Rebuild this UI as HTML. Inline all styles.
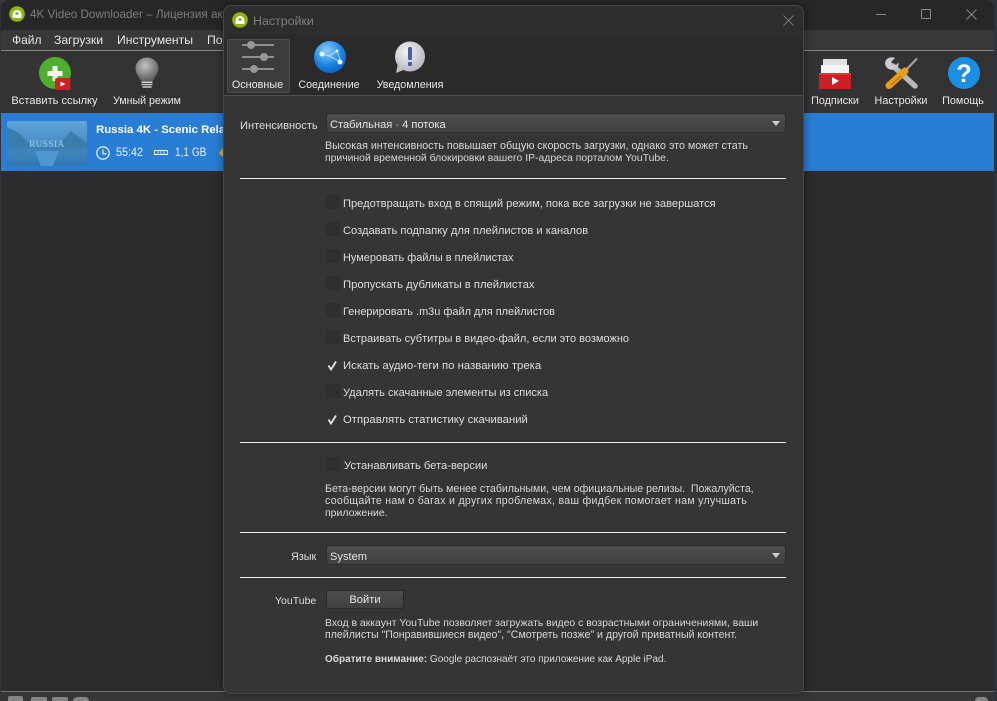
<!DOCTYPE html>
<html><head><meta charset="utf-8"><style>
*{box-sizing:border-box}
html,body{margin:0;padding:0;width:997px;height:701px;overflow:hidden;background:#30343a;font-family:"Liberation Sans","Noto Sans CJK SC",sans-serif;color:#e2e2e2}
.a{position:absolute;white-space:pre}
.t{font-size:11.2px;line-height:14px;color:#dedede}
.s{font-size:10.6px;line-height:13px;color:#d8d8d8}
.cb{position:absolute;left:326px;width:14px;height:14px;background:#2f2f2f;border-radius:1px}
.l{position:absolute;left:240px;height:1px;background:#efefef}
.combo{position:absolute;left:326px;width:460px;height:20px;border:1px solid #2a2a2a;border-radius:2px;background:linear-gradient(#4d4d4d,#404040);font-size:11.1px;line-height:20px;padding:1px 0 0 3px;color:#e4e4e4}
.combo:after{content:"";position:absolute;right:5px;top:7px;border-left:4.5px solid transparent;border-right:4.5px solid transparent;border-top:5px solid #cfcfcf}
.tb{font-size:10.8px;line-height:14px;color:#e8e8e8;text-align:center}
</style></head><body>
<!-- main window -->
<div class="a" style="left:1px;top:0;width:993px;height:701px;background:#2c2c2c;border-radius:8px 8px 0 0;overflow:hidden">
 <div class="a" style="left:0;top:0;width:993px;height:30px;background:#272727"></div>
 <div class="a" style="left:0;top:30px;width:993px;height:20px;background:#383838"></div>
 <div class="a" style="left:0;top:50px;width:993px;height:1px;background:#858585"></div>
 <div class="a" style="left:0;top:51px;width:993px;height:62px;background:#333"></div>
 <div class="a" style="left:0;top:113px;width:993px;height:58px;background:#2a7dd4"></div>
 <div class="a" style="left:0;top:691px;width:993px;height:1px;background:#6e6e6e"></div>
 <div class="a" style="left:0;top:692px;width:993px;height:9px;background:#363636"></div>
</div>
<svg class="a" style="left:9px;top:6px" width="17" height="17" viewBox="0 0 17 17"><circle cx="8" cy="8" r="7.8" fill="#8fb512"/><path d="M3.5 8.5a4.5 4.5 0 0 1 9 0z" fill="#fff"/><rect x="3.5" y="8.5" width="9" height="3.5" rx="1" fill="#fff"/><rect x="6.5" y="6.5" width="3" height="2" fill="#6f8f10"/></svg>
<div class="a" style="left:30px;top:7px;font-size:11.7px;line-height:16px;color:#7d7d7d">4K Video Downloader – Лицензия ак</div>
<div class="a t" style="left:12px;top:33px;font-size:12px;color:#e6e6e6">Файл</div>
<div class="a t" style="left:54px;top:33px;font-size:12.2px;color:#e6e6e6">Загрузки</div>
<div class="a t" style="left:117px;top:33px;font-size:12.2px;color:#e6e6e6">Инструменты</div>
<div class="a t" style="left:207px;top:33px;font-size:12.2px;color:#e6e6e6">По</div>
<!-- window controls -->
<div class="a" style="left:876px;top:14px;width:10px;height:1px;background:#8a8a8a"></div>
<div class="a" style="left:921px;top:9px;width:10px;height:10px;border:1px solid #8a8a8a;border-radius:1px"></div>
<svg class="a" style="left:966px;top:9px" width="11" height="11"><path d="M.5.5l10 10M10.5.5l-10 10" stroke="#8a8a8a" fill="none"/></svg>
<!-- toolbar left -->
<svg class="a" style="left:38px;top:56px" width="36" height="36" viewBox="0 0 36 36"><circle cx="17" cy="17" r="16" fill="#4fae2c"/><path d="M14.500 10h5v5h5v5h-5v5h-5v-5h-5v-5h5z" fill="#f3f7ee"/><rect x="17" y="22" width="15.500" height="12" rx="2" fill="#cf2027"/><path d="M22.500 25.500l5 2.500-5 2.500z" fill="#fff"/></svg>
<div class="a tb" style="left:0;top:94px;width:109px;font-size:11.1px">Вставить ссылку</div>
<svg class="a" style="left:135px;top:57px" width="24" height="32" viewBox="0 0 24 32"><defs><radialGradient id="b" cx=".42" cy=".35" r=".65"><stop offset="0" stop-color="#c4c4c4"/><stop offset="1" stop-color="#5e5e5e"/></radialGradient></defs><path d="M12 .5C5.500.5.500 5.500.5 11.500c0 5.500 4 8 5.500 12.500h12c1.500-4.500 5.500-7 5.500-12.500C23.500 5.500 18.500.5 12 .5z" fill="url(#b)"/><rect x="6.500" y="24.500" width="11" height="1.500" fill="#d8d8d8"/><rect x="6.500" y="26.800" width="11" height="1.500" fill="#c4c4c4"/><rect x="7.500" y="29" width="9" height="2" fill="#a8a8a8"/></svg>
<div class="a tb" style="left:108px;top:94px;width:78px;font-size:10.6px">Умный режим</div>
<!-- toolbar right -->
<svg class="a" style="left:819px;top:58px" width="32" height="32" viewBox="0 0 32 32"><rect x="4" y="1" width="24" height="6" fill="#e0e0e0"/><rect x="2" y="7" width="28" height="8" fill="#f4f4f4"/><rect x="0" y="15" width="32" height="16" fill="#cc1f24"/><rect x="0" y="15" width="32" height="2" fill="#e0363a"/><path d="M13 19l7 4-7 4z" fill="#fff"/></svg>
<div class="a tb" style="left:806px;top:94px;width:58px">Подписки</div>
<svg class="a" style="left:884px;top:57px" width="35" height="34" viewBox="0 0 35 34"><path d="M9 9L31 29" stroke="#b4b9be" stroke-width="5.500" stroke-linecap="round"/><path d="M11 1L7.500 4.500 8 8 11.500 8.500 14.500 5.500C15.500 10 10.500 14 6 12.500 1 11-.5 5 3 2 5 0 9 0 11 1z" fill="#c9cdd2"/><path d="M33 1.500L20 15" stroke="#a2a2a2" stroke-width="2.200"/><path d="M21 14L5 28.500" stroke="#ec9d14" stroke-width="7" stroke-linecap="round"/><path d="M17 19L7 28" stroke="#c67a08" stroke-width="1.800"/></svg>
<div class="a tb" style="left:871px;top:94px;width:60px">Настройки</div>
<svg class="a" style="left:948px;top:57px" width="32" height="32" viewBox="0 0 32 32"><circle cx="16" cy="16" r="16" fill="#1b8fe4"/><text x="16" y="25" text-anchor="middle" font-family="Liberation Sans" font-weight="bold" font-size="25" fill="#fff">?</text></svg>
<div class="a tb" style="left:938px;top:94px;width:50px">Помощь</div>
<!-- list item -->
<svg class="a" style="left:7px;top:121px" width="80" height="45" viewBox="0 0 80 45"><defs><linearGradient id="th" x1="0" y1="0" x2="0" y2="1"><stop offset="0" stop-color="#5fa5d8"/><stop offset=".5" stop-color="#4a8ec4"/><stop offset="1" stop-color="#2f76b2"/></linearGradient></defs><rect width="80" height="45" rx="2" fill="url(#th)"/><path d="M0 6L12 12 26 26 50 26 64 10 80 22V27H0z" fill="#3a7eae"/><path d="M0 27H80L66 38 52 30 28 30 14 40 0 33z" fill="#3d83b8"/><path d="M28 30H52L46 45H34z" fill="#4f97cf"/><text x="40" y="26" text-anchor="middle" font-family="Liberation Serif" font-size="9" letter-spacing=".6" fill="#a8cbe3">RUSSIA</text></svg>
<div class="a" style="left:96px;top:123px;font-size:11.4px;line-height:15px;font-weight:bold;color:#fff">Russia 4K - Scenic Relax</div>
<svg class="a" style="left:96px;top:146px" width="14" height="14" viewBox="0 0 14 14"><circle cx="7" cy="7" r="6.200" fill="none" stroke="#fff" stroke-width="1.100"/><path d="M7 3.500V7.800H10.500" fill="none" stroke="#fff" stroke-width="1.100"/></svg>
<div class="a" style="left:116px;top:145px;font-size:12px;line-height:15px;color:#e8f1fb;transform:scaleX(.9);transform-origin:left">55:42</div>
<svg class="a" style="left:154px;top:149px" width="14" height="7"><rect x=".5" y="1.500" width="13" height="4" fill="none" stroke="#fff"/><path d="M4 2v3M7 2v3M10 2v3" stroke="#fff" stroke-width=".7"/></svg>
<div class="a" style="left:175px;top:145px;font-size:12px;line-height:15px;color:#e8f1fb;transform:scaleX(.84);transform-origin:left">1,1 GB</div>
<div class="a" style="left:219px;top:146px;width:5px;height:12px;background:#d9b44a;clip-path:polygon(100% 0,100% 100%,0 60%)"></div>
<!-- status bar icons -->
<div class="a" style="left:8px;top:696px;width:15px;height:5px;background:#858585;border-radius:2px 2px 0 0"></div>
<div class="a" style="left:31px;top:697px;width:16px;height:4px;background:#858585;border-radius:2px 2px 0 0"></div>
<div class="a" style="left:52px;top:697px;width:16px;height:4px;background:#858585;border-radius:2px 2px 0 0"></div>
<div class="a" style="left:73px;top:697px;width:16px;height:4px;background:#858585;border-radius:4px 4px 0 0"></div>
<div class="a" style="left:975px;top:697px;width:13px;height:4px;background:#858585;border-radius:4px 4px 0 0"></div>

<!-- dialog -->
<div class="a" style="left:223px;top:5px;width:581px;height:689px;background:#353535;border:1px solid #474747;border-radius:8px;box-shadow:0 0 10px rgba(0,0,0,.4)"></div>
<div class="a" style="left:224px;top:6px;width:579px;height:28px;background:#2d2d2d;border-radius:8px 8px 0 0"></div>
<div class="a" style="left:224px;top:34px;width:579px;height:61px;background:#2a2a2a"></div>
<div class="a" style="left:224px;top:95px;width:579px;height:1px;background:#505050"></div>
<svg class="a" style="left:232px;top:12px" width="17" height="17" viewBox="0 0 17 17"><circle cx="8" cy="8" r="7.800" fill="#8fb512"/><path d="M3.500 8.500a4.500 4.500 0 0 1 9 0z" fill="#fff"/><rect x="3.500" y="8.500" width="9" height="3.500" rx="1" fill="#fff"/><rect x="6.500" y="6.500" width="3" height="2" fill="#6f8f10"/></svg>
<div class="a" style="left:253px;top:13px;font-size:12.400px;line-height:16px;color:#7f7f7f">Настройки</div>
<svg class="a" style="left:783px;top:15px" width="11" height="11"><path d="M.5.5l10 10M10.500.5l-10 10" stroke="#7a7a7a" fill="none"/></svg>
<!-- tabs -->
<div class="a" style="left:227px;top:39px;width:63px;height:54px;background:#3c3c3c;border:1px solid #4c4c4c;border-radius:2px"></div>
<svg class="a" style="left:241px;top:40px" width="34" height="34" viewBox="0 0 34 34"><path d="M1 5H33M1 17H33M1 29H33" stroke="#8f8f8f" stroke-width="2"/><circle cx="10" cy="5" r="4" fill="#989898"/><circle cx="23" cy="17" r="4" fill="#989898"/><circle cx="13" cy="29" r="4" fill="#989898"/></svg>
<div class="a tb" style="left:226px;top:78px;width:63px">Основные</div>
<svg class="a" style="left:314px;top:41px" width="32" height="32" viewBox="0 0 32 32"><defs><radialGradient id="g" cx=".4" cy=".3" r=".75"><stop offset="0" stop-color="#8ccdf9"/><stop offset=".6" stop-color="#1c86e4"/><stop offset="1" stop-color="#0f5fc0"/></radialGradient></defs><circle cx="16" cy="16" r="16" fill="url(#g)"/><path d="M7 13L15 15 23 10 27 21 15 15" fill="none" stroke="#d5edff" stroke-width=".8"/><circle cx="8" cy="13" r="2.500" fill="#eef8ff"/><circle cx="23" cy="10" r="1.500" fill="#eef8ff"/><circle cx="26" cy="21" r="2.500" fill="#eef8ff"/></svg>
<div class="a tb" style="left:292px;top:78px;width:74px;font-size:10.700px">Соединение</div>
<svg class="a" style="left:394px;top:41px" width="32" height="34" viewBox="0 0 32 34"><defs><radialGradient id="n" cx=".4" cy=".35" r=".7"><stop offset="0" stop-color="#f2f2f6"/><stop offset="1" stop-color="#b4b4be"/></radialGradient></defs><circle cx="16" cy="15.500" r="15" fill="url(#n)"/><path d="M4 22L2 32 12 28z" fill="#c0c0c8"/><rect x="14" y="6" width="4" height="13" rx="1.500" fill="#4a5ea0"/><rect x="14" y="21" width="4" height="4" rx="1" fill="#4a5ea0"/></svg>
<div class="a tb" style="left:370px;top:78px;width:80px;font-size:10.700px">Уведомления</div>
<!-- intensity -->
<div class="a t" style="left:240px;top:119px;font-size:11.100px">Интенсивность</div>
<div class="combo" style="top:113px">Стабильная · 4 потока</div>
<div class="a s" style="left:325px;top:140px;font-size:10.700px">Высокая интенсивность повышает общую скорость загрузки, однако это может стать</div>
<div class="a s" style="left:325px;top:152px;font-size:10.400px">причиной временной блокировки вашего IP-адреса порталом YouTube.</div>
<div class="l" style="top:178px;width:546px"></div>
<!-- checkboxes -->
<div class="cb" style="top:195px"></div><div class="a t" style="left:343px;top:197px;font-size:11.140px">Предотвращать вход в спящий режим, пока все загрузки не завершатся</div>
<div class="cb" style="top:222px"></div><div class="a t" style="left:343px;top:224px;font-size:11.150px">Создавать подпапку для плейлистов и каналов</div>
<div class="cb" style="top:249px"></div><div class="a t" style="left:343px;top:251px;font-size:10.950px">Нумеровать файлы в плейлистах</div>
<div class="cb" style="top:276px"></div><div class="a t" style="left:343px;top:278px;font-size:11.260px">Пропускать дубликаты в плейлистах</div>
<div class="cb" style="top:303px"></div><div class="a t" style="left:343px;top:305px;font-size:10.950px">Генерировать .m3u файл для плейлистов</div>
<div class="cb" style="top:330px"></div><div class="a t" style="left:343px;top:332px;font-size:11px">Встраивать субтитры в видео-файл, если это возможно</div>
<svg class="a" style="left:327px;top:361px" width="11" height="10" viewBox="0 0 11 10"><path d="M1.500 4.500L4 8.500 9 .5" fill="none" stroke="#e4e4e4" stroke-width="1.800"/></svg><div class="a t" style="left:343px;top:359px;font-size:11.370px">Искать аудио-теги по названию трека</div>
<div class="cb" style="top:384px"></div><div class="a t" style="left:343px;top:386px;font-size:11.040px">Удалять скачанные элементы из списка</div>
<svg class="a" style="left:327px;top:415px" width="11" height="10" viewBox="0 0 11 10"><path d="M1.500 4.500L4 8.500 9 .5" fill="none" stroke="#e4e4e4" stroke-width="1.800"/></svg><div class="a t" style="left:343px;top:413px;font-size:11.320px">Отправлять статистику скачиваний</div>
<div class="l" style="top:442px;width:546px"></div>
<div class="cb" style="top:457px"></div><div class="a t" style="left:344px;top:459px">Устанавливать бета-версии</div>
<div class="a s" style="left:325px;top:483px">Бета-версии могут быть менее стабильными, чем официальные релизы.  Пожалуйста,</div>
<div class="a s" style="left:325px;top:495px;letter-spacing:.29px">сообщайте нам о багах и других проблемах, ваш фидбек помогает нам улучшать</div>
<div class="a s" style="left:325px;top:507px;font-size:10.500px">приложение.</div>
<div class="l" style="top:532px;width:546px"></div>
<div class="a t" style="left:291px;top:550px;font-size:10.800px">Язык</div>
<div class="combo" style="top:545px">System</div>
<div class="l" style="top:577px;width:546px"></div>
<div class="a t" style="left:275px;top:594px;font-size:10.500px">YouTube</div>
<div class="a" style="left:326px;top:590px;width:78px;height:19px;background:linear-gradient(#4d4d4d,#404040);border:1px solid #2a2a2a;border-radius:2px;text-align:center;font-size:11.200px;line-height:19px;color:#e6e6e6">Войти</div>
<div class="a s" style="left:325px;top:617px;font-size:10.430px">Вход в аккаунт YouTube позволяет загружать видео с возрастными ограничениями, ваши</div>
<div class="a s" style="left:325px;top:629px">плейлисты "Понравившиеся видео", "Смотреть позже" и другой приватный контент.</div>
<div class="a s" style="left:325px;top:653px;font-size:10px"><b>Обратите внимание:</b> Google распознаёт это приложение как Apple iPad.</div>
</body></html>
